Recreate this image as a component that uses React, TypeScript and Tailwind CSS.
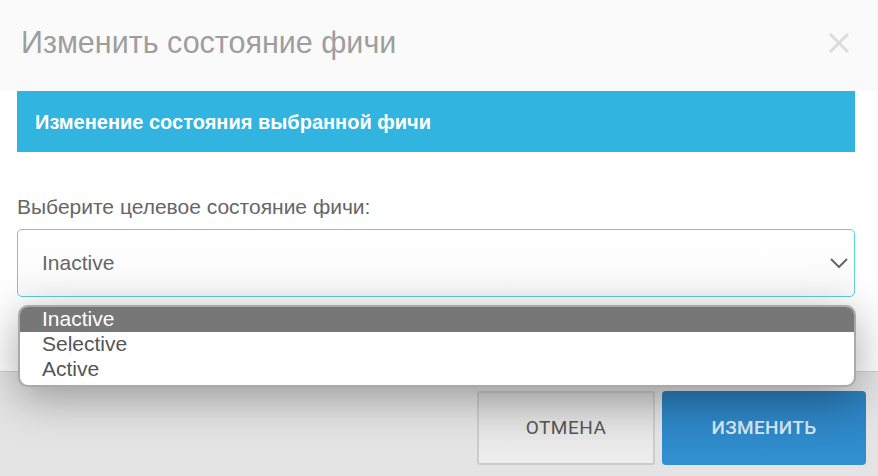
const options = ["Inactive", "Selective", "Active"];

const Chevron = () => (
  <svg width="20" height="12" viewBox="0 0 20 12" fill="none">
    <path d="M2 2l8 8 8-8" stroke="#666" strokeWidth="2" />
  </svg>
);

const CloseIcon = () => (
  <svg width="22" height="22" viewBox="0 0 22 22" fill="none">
    <path d="M2 2l18 18M20 2L2 20" stroke="#dcdcdc" strokeWidth="3" />
  </svg>
);

export default function App() {
  return (
    <div className="relative w-[878px] h-[476px] overflow-hidden bg-white font-['Liberation_Sans',Arial,sans-serif]">
      {/* Header */}
      <div className="flex h-[91px] items-center justify-between bg-[#fafafa] pb-[6px] pl-[21px] pr-[28px]">
        <h1 className="text-[30.5px] text-[#9e9e9e]">Изменить состояние фичи</h1>
        <button className="flex items-center">
          <CloseIcon />
        </button>
      </div>

      {/* Body */}
      <div className="h-[280px] pl-[17px] pr-[23px]">
        <div className="flex h-[61px] items-center bg-[#31b4e0] px-[18px] text-[20px] font-bold text-white">
          Изменение состояния выбранной фичи
        </div>
        <div className="mt-[43px] text-[21px] leading-[24px] text-[#666]">Выберите целевое состояние фичи:</div>
        <div className="mt-[10px] flex h-[68px] items-center justify-between rounded-[5px] border border-[#5fd0e0] bg-gradient-to-b from-white to-[#fafafa] pl-[24px] pr-[5px]">
          <span className="text-[21px] text-[#666]">Inactive</span>
          <Chevron />
        </div>
      </div>

      {/* Footer */}
      <div className="flex h-[105px] items-start justify-end gap-[7px] border-t border-[#d0d0d0] bg-[#e4e4e4] pr-[12px] pt-[19px] font-['Roboto',sans-serif]">
        <button className="h-[74px] w-[178px] rounded-[3px] border-2 border-[#cccccc] bg-gradient-to-b from-[#dcdcdc] to-[#eeeeee] text-[19px] tracking-[0.5px] text-[#555]">
          ОТМЕНА
        </button>
        <button className="h-[74px] w-[204px] rounded-[4px] bg-gradient-to-b from-[#2b7fbe] to-[#3290d1] text-[19px] font-medium tracking-[0.3px] text-[#d8e8f4]">
          ИЗМЕНИТЬ
        </button>
      </div>

      {/* Open select list */}
      <ul className="absolute left-[18px] top-[305px] w-[838px] overflow-hidden rounded-[10px] border-2 border-[#a9a9a9] bg-white pb-[3px] shadow-[0_10px_45px_rgba(0,0,0,0.35)]">
        {options.map((o, i) => (
          <li
            key={o}
            className={`h-[25px] pl-[22px] text-[21px] leading-[24px] ${i === 0 ? "bg-[#777] text-white" : "text-[#555]"}`}
          >
            {o}
          </li>
        ))}
      </ul>
    </div>
  );
}
